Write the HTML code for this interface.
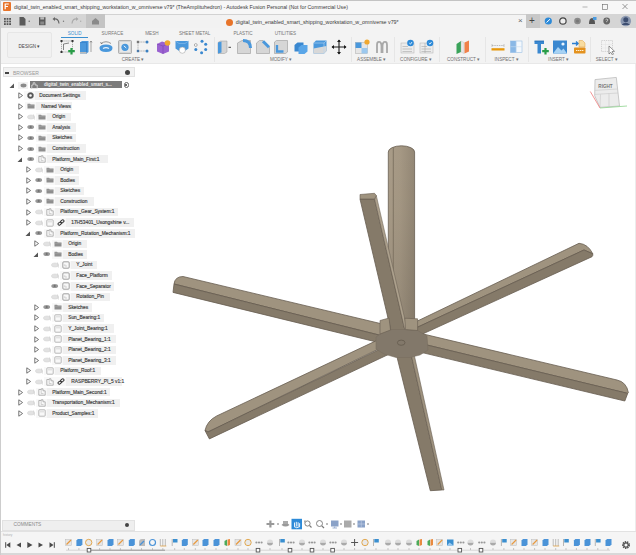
<!DOCTYPE html><html><head><meta charset="utf-8"><style>
*{margin:0;padding:0;box-sizing:border-box}
html,body{width:636px;height:555px;overflow:hidden;background:#fff;font-family:"Liberation Sans",sans-serif;color:#333;position:relative}
.a{position:absolute}
.t{position:absolute;white-space:nowrap;font-size:5px;line-height:6px;color:#444}
.c{position:absolute;white-space:nowrap;font-size:4.6px;line-height:5px;color:#666;transform:translateX(-50%)}
.sep{position:absolute;top:37px;width:1px;height:25px;background:#e6e6e6}
</style></head><body><svg class="a" style="left:0;top:0" width="636" height="555" viewBox="0 0 636 555"><defs><linearGradient id="pg" x1="0" x2="1" y1="0" y2="0"><stop offset="0" stop-color="#a99c88"/><stop offset="0.45" stop-color="#a59884"/><stop offset="1" stop-color="#938775"/></linearGradient></defs><path d="M388.3,152 A13.15,6.2 0 0 1 414.6,152 L414.6,322 L388.3,322 Z" fill="url(#pg)" stroke="#675d50" stroke-width="0.8" stroke-linejoin="round"/><defs><linearGradient id="pv" x1="0" x2="0" y1="0" y2="1"><stop offset="0" stop-color="#000" stop-opacity="0"/><stop offset="0.35" stop-color="#000" stop-opacity="0.02"/><stop offset="1" stop-color="#000" stop-opacity="0.1"/></linearGradient></defs><rect x="388.7" y="150" width="25.5" height="172" fill="url(#pv)"/><line x1="393.3" y1="147.5" x2="393.3" y2="322" stroke="#7a6f60" stroke-width="0.9"/><path d="M579,243.3 Q588,244 592.8,253.8 L584,250 L405,333 L405,327 Z" fill="#9f937f" stroke="#675d50" stroke-width="0.8" stroke-linejoin="round"/><path d="M584,250 L592.8,253.8 Q593,256 592,256.7 L405,342 L405,333 Z" fill="#857a69" stroke="#675d50" stroke-width="0.8" stroke-linejoin="round"/><path d="M174,284 Q175,276.5 183,276.5 L395,327 L395,339 Z" fill="#9f937f" stroke="#675d50" stroke-width="0.8" stroke-linejoin="round"/><path d="M174,284 L395,339 L395,346.5 L173,292.4 Z" fill="#857a69" stroke="#675d50" stroke-width="0.8" stroke-linejoin="round"/><path d="M400,328.5 L617,380 Q626.5,382 628.4,392.7 L627.7,393.4 L400,338.5 Z" fill="#9f937f" stroke="#675d50" stroke-width="0.8" stroke-linejoin="round"/><path d="M400,338.5 L627.7,393.4 L624.8,401 L400,347.3 Z" fill="#857a69" stroke="#675d50" stroke-width="0.8" stroke-linejoin="round"/><path d="M400,329.5 L216.6,416 Q207,421 205,430.5 L208,432 L400,338.5 Z" fill="#9f937f" stroke="#675d50" stroke-width="0.8" stroke-linejoin="round"/><path d="M400,339.5 L208,432 L205,430.5 L209.4,438.9 L400,349 Z" fill="#857a69" stroke="#675d50" stroke-width="0.8" stroke-linejoin="round"/><polygon points="360.0,199.0 374.6,199.0 406.0,335.0 392.0,335.0" fill="#857a69" stroke="#675d50" stroke-width="0.8" stroke-linejoin="round"/><polygon points="374.6,199.0 376.3,195.5 408.5,335.0 406.0,335.0" fill="#ada18d" stroke="#675d50" stroke-width="0.5" stroke-linejoin="round"/><polygon points="360.0,194.5 374.5,193.3 376.3,195.5 374.6,199.0 360.0,199.0" fill="#9f937f" stroke="#675d50" stroke-width="0.6" stroke-linejoin="round"/><polygon points="394.0,345.0 409.0,345.0 441.8,490.0 430.3,490.7" fill="#857a69" stroke="#675d50" stroke-width="0.8" stroke-linejoin="round"/><polygon points="409.0,345.0 412.0,345.0 444.0,490.0 441.8,490.0" fill="#9f937f" stroke="#675d50" stroke-width="0.6" stroke-linejoin="round"/><polygon points="376.0,337.0 384.0,331.5 392.0,329.5 404.0,329.5 417.6,330.5 427.0,336.0 428.0,350.0 420.0,355.0 410.0,357.5 396.0,357.5 384.0,354.0 376.0,349.0" fill="#82786a" stroke="#766c5e" stroke-width="0.5" stroke-linejoin="round"/><polygon points="380.0,320.5 389.0,318.0 390.5,330.0 380.0,334.0" fill="#9f937f" stroke="#675d50" stroke-width="0.6" stroke-linejoin="round"/><polygon points="404.8,318.2 417.6,318.8 417.6,330.5 405.5,329.5" fill="#9f937f" stroke="#675d50" stroke-width="0.6" stroke-linejoin="round"/><ellipse cx="401.2" cy="342.7" rx="3.8" ry="2.6" fill="none" stroke="#675d50" stroke-width="0.9"/></svg><div class="a" style="left:0;top:0;width:636px;height:14.5px;background:#f7f7f7;border-top:0.8px solid #c4c4c4;border-bottom:1px solid #d2d2d2"></div>
<svg class="a" style="left:3px;top:2.2px" width="8" height="9"><rect x="0" y="0" width="8" height="9" rx="1" fill="#e8742a"/><path d="M2.2,7.2 V2 H5.8 M2.2,4.5 H5" stroke="#fff" stroke-width="1.2" fill="none"/></svg>
<div class="t" style="left:14px;top:3.5px;font-size:5.22px;color:#3a3a3a">digital_twin_enabled_smart_shipping_workstation_w_omniverse v79* (TheAmplituhedron) - Autodesk Fusion Personal (Not for Commercial Use)</div>
<svg class="a" style="left:578px;top:0" width="58" height="14"><path d="M4.5,7 H9.5" stroke="#888" stroke-width="0.6"/><rect x="24.3" y="4.3" width="5" height="5" fill="none" stroke="#666" stroke-width="0.6"/><path d="M44.5,4 L49.5,9 M49.5,4 L44.5,9" stroke="#666" stroke-width="0.65"/></svg>
<div class="a" style="left:0;top:14.5px;width:636px;height:13.5px;background:#f2f2f2"></div>
<div class="a" style="left:0;top:14px;width:105px;height:14px;background:#d5d5d5"></div>
<div class="a" style="left:86px;top:14px;width:19px;height:14px;background:#c4c4c4"></div>
<div class="a" style="left:222px;top:14.5px;width:304px;height:13.5px;background:#f3f3f3"></div>
<div class="a" style="left:526px;top:14px;width:14px;height:14px;background:#c8c8c8"></div>
<div class="a" style="left:540px;top:14px;width:96px;height:14px;background:#d5d5d5"></div>
<div class="a" style="left:226px;top:18.7px;width:7px;height:7px;background:#e8742a;border-radius:50%"></div>
<div class="t" style="left:235.8px;top:19px;font-size:5.3px;color:#3a3a3a">digital_twin_enabled_smart_shipping_workstation_w_omniverse v79*</div>
<div class="t" style="left:518px;top:15px;font-size:8px;line-height:11px;color:#666">&#xd7;</div>
<div class="t" style="left:529px;top:14px;font-size:10px;line-height:13px;color:#444">+</div>
<svg class="a" style="left:540px;top:14px" width="96" height="14"><circle cx="8.3" cy="7" r="3.6" fill="#2d8ad8"/><path d="M6.5,8.5 L10,5.2" stroke="#fff" stroke-width="1"/><circle cx="22.9" cy="7" r="3.2" fill="#eee" stroke="#444" stroke-width="1.2"/><circle cx="37.5" cy="7" r="3.3" fill="#8a8a8a"/><circle cx="37.5" cy="7" r="1.5" fill="#777"/><path d="M49,10 Q49,4 52,4 Q55,4 55,10Z" fill="#555"/><rect x="53" y="3" width="3.5" height="3" fill="#4a9be0"/><circle cx="66.7" cy="7" r="3.4" fill="#666"/><path d="M65.5,5.8 Q66.7,4.3 67.9,5.8 Q67.9,6.8 66.7,7.3 V8.2" stroke="#ddd" stroke-width="0.8" fill="none"/><circle cx="85.8" cy="7" r="5.3" fill="#8b98b0"/><circle cx="85.8" cy="5.8" r="2.5" fill="#3d4e70"/><path d="M81.5,11 Q85.8,6.5 90,11Z" fill="#3d4e70"/></svg>
<svg class="a" style="left:0;top:14px" width="105" height="14"><g fill="#555"><rect x="4" y="4" width="1.8" height="1.8"/><rect x="6.6" y="4" width="1.8" height="1.8"/><rect x="9.2" y="4" width="1.8" height="1.8"/><rect x="4" y="6.6" width="1.8" height="1.8"/><rect x="6.6" y="6.6" width="1.8" height="1.8"/><rect x="9.2" y="6.6" width="1.8" height="1.8"/><rect x="4" y="9.2" width="1.8" height="1.8"/><rect x="6.6" y="9.2" width="1.8" height="1.8"/><rect x="9.2" y="9.2" width="1.8" height="1.8"/></g><path d="M19.5,3 H23.5 L25.5,5 V11.5 H19.5Z" fill="#5a5a5a"/><circle cx="29.2" cy="7.3" r="0.7" fill="#666"/><rect x="39" y="3.2" width="6.5" height="8" fill="#5a5a5a"/><rect x="40.3" y="3.2" width="3.8" height="2.3" fill="#bbb"/><rect x="40.3" y="7.5" width="3.8" height="3" fill="#888"/><path d="M54,5 Q58.5,4.2 59,9.5" stroke="#666" stroke-width="1.2" fill="none"/><path d="M52.5,5 L55,3 V7Z" fill="#666"/><circle cx="63.5" cy="7.3" r="0.7" fill="#777"/><path d="M77,5 Q72.5,4.2 72,9.5" stroke="#aaa" stroke-width="1.2" fill="none"/><path d="M78.5,5 L76,3 V7Z" fill="#aaa"/><circle cx="80.7" cy="7.3" r="0.7" fill="#aaa"/><path d="M92,7 L95.5,4 L99,7 V10.5 H92Z" fill="#8a8a8a"/></svg>
<div class="a" style="left:0;top:28px;width:636px;height:36px;background:#f3f3f3;border-bottom:0.6px solid #e8e8e8"></div>
<div class="a" style="left:7px;top:32px;width:45px;height:26px;background:#f1f1f1;border:0.8px solid #e6e6e6;border-radius:2px"></div>
<div class="c" style="left:29.5px;top:44.3px;color:#444">DESIGN &#x25be;</div>
<div class="c" style="left:74.7px;top:30.7px;color:#3a8fd0">SOLID</div>
<div class="c" style="left:112.4px;top:30.7px;color:#777">SURFACE</div>
<div class="c" style="left:151.9px;top:30.7px;color:#777">MESH</div>
<div class="c" style="left:194.7px;top:30.7px;color:#777">SHEET METAL</div>
<div class="c" style="left:243px;top:30.7px;color:#777">PLASTIC</div>
<div class="c" style="left:285.4px;top:30.7px;color:#777">UTILITIES</div>
<div class="a" style="left:61.3px;top:36.5px;width:26.5px;height:1.3px;background:#3a8fd0"></div>
<div class="c" style="left:133px;top:57.2px;color:#707070">CREATE &#x25be;</div>
<div class="c" style="left:281px;top:57.2px;color:#707070">MODIFY &#x25be;</div>
<div class="c" style="left:371.6px;top:57.2px;color:#707070">ASSEMBLE &#x25be;</div>
<div class="c" style="left:416px;top:57.2px;color:#707070">CONFIGURE &#x25be;</div>
<div class="c" style="left:463.5px;top:57.2px;color:#707070">CONSTRUCT &#x25be;</div>
<div class="c" style="left:506.6px;top:57.2px;color:#707070">INSPECT &#x25be;</div>
<div class="c" style="left:558.6px;top:57.2px;color:#707070">INSERT &#x25be;</div>
<div class="c" style="left:606.8px;top:57.2px;color:#707070">SELECT &#x25be;</div>
<div class="sep" style="left:214px"></div>
<div class="sep" style="left:350.6px"></div>
<div class="sep" style="left:394px"></div>
<div class="sep" style="left:439px"></div>
<div class="sep" style="left:484.5px"></div>
<div class="sep" style="left:528.4px"></div>
<div class="sep" style="left:589.8px"></div>
<svg class="a" style="left:60px;top:38.5px" width="16" height="16" viewBox="0 0 16 16"><rect x="1.5" y="2" width="11" height="11" fill="none" stroke="#777" stroke-width="0.6" stroke-dasharray="1.2 0.8"/><g fill="#333"><rect x="0.5" y="1" width="2" height="2"/><rect x="11.5" y="1" width="2" height="2"/><rect x="0.5" y="12" width="2" height="2"/></g><path d="M3.5,11 L3.5,5 L9,4" stroke="#555" stroke-width="0.7" fill="none"/><path d="M11.5,9 V15.5 M8.2,12.2 H14.8" stroke="#2a9d48" stroke-width="2.2"/></svg>
<svg class="a" style="left:78px;top:38.5px" width="16" height="16" viewBox="0 0 16 16"><path d="M2,3.5 L4,2 L10.5,2 L10.5,13 L8.5,14.5 L2,14.5Z" fill="#4a98dc"/><path d="M2,3.5 H8.5 V14.5" stroke="#2f7bc4" stroke-width="0.6" fill="none"/><path d="M2,13 H8.5 L8.5,14.5 L2,14.5Z" fill="#bbb"/><path d="M13,2 V13" stroke="#555" stroke-width="0.5"/><path d="M12,3.5 L13,2 L14,3.5" stroke="#555" stroke-width="0.5" fill="none"/></svg>
<svg class="a" style="left:98px;top:38.5px" width="16" height="16" viewBox="0 0 16 16"><path d="M1.5,9 Q1.5,5.5 8,5.5 Q14.5,5.5 14.5,9 Q14.5,13 8,13 Q1.5,13 1.5,9Z" fill="#4a98dc"/><path d="M5,9.5 Q8,7.8 11,9.5" stroke="#e8f2fb" stroke-width="1.2" fill="none"/><path d="M3,4.5 Q8,1 13,4.5" stroke="#555" stroke-width="0.6" fill="none"/><path d="M3,4.5 L2.5,3 M3,4.5 L4.5,4.3" stroke="#555" stroke-width="0.5"/></svg>
<svg class="a" style="left:116.8px;top:38.5px" width="16" height="16" viewBox="0 0 16 16"><rect x="1.5" y="1.5" width="13" height="13" rx="1" fill="#d6d6d6" stroke="#999" stroke-width="0.7"/><rect x="3" y="3" width="10" height="10" fill="#e8e8e8"/><circle cx="8" cy="8.3" r="3.6" fill="#4a98dc"/><path d="M6.8,6.8 L9.3,9" stroke="#fff" stroke-width="0.9"/></svg>
<svg class="a" style="left:134.7px;top:38.5px" width="16" height="16" viewBox="0 0 16 16"><path d="M3,3 H12 M3,3 V12 M3,12 H12" stroke="#666" stroke-width="0.5" stroke-dasharray="1 0.6"/><rect x="1.8" y="1.8" width="2.4" height="2.4" fill="#777"/><rect x="1.8" y="10.8" width="2.4" height="2.4" fill="#4a78a8"/><circle cx="12" cy="3" r="1.5" fill="#3a7fc0"/><circle cx="12" cy="12" r="1.5" fill="#3a7fc0"/></svg>
<svg class="a" style="left:154.5px;top:38.5px" width="16" height="16" viewBox="0 0 16 16"><path d="M2,5 L7,2.5 L14,4.5 L14,12.5 L8,15 L2,12.5Z" fill="#9a62d0"/><path d="M2,5 L8,7 L14,4.5 M8,7 V15" stroke="#7a44b4" stroke-width="0.6" fill="none"/><circle cx="12.5" cy="4" r="2.8" fill="#f0a830"/></svg>
<svg class="a" style="left:174px;top:38.5px" width="16" height="16" viewBox="0 0 16 16"><path d="M1.5,2 H14.5 V9.5 Q8,15.5 1.5,9.5Z" fill="#4a98dc"/><path d="M1.5,2 L5,4.5 H11 L14.5,2" stroke="#8cc0ec" stroke-width="0.6" fill="none"/><circle cx="8.3" cy="11.2" r="3.1" fill="#fff" stroke="#999" stroke-width="0.5"/></svg>
<svg class="a" style="left:192.3px;top:38.5px" width="16" height="16" viewBox="0 0 16 16"><g fill="#3a88d0"><circle cx="10" cy="2.2" r="1.5"/><circle cx="13.7" cy="5.3" r="1.5"/><circle cx="13.7" cy="10.5" r="1.5"/><circle cx="9.6" cy="13.8" r="1.5"/><circle cx="3.8" cy="10.5" r="1.5"/></g><circle cx="3.8" cy="6" r="1.4" fill="#fff" stroke="#666" stroke-width="0.5"/></svg>
<svg class="a" style="left:216.2px;top:38.5px" width="16" height="16" viewBox="0 0 16 16"><path d="M2,3.5 L4.5,2 L11,2 L11,13 L8.5,14.5 L2,14.5Z" fill="#d4d4d4" stroke="#999" stroke-width="0.5"/><path d="M2,3.5 L5.5,2.5 L5.5,13.5 L2,14.5Z" fill="#4a98dc"/><path d="M12.5,8.3 H15" stroke="#333" stroke-width="0.9"/></svg>
<svg class="a" style="left:235.6px;top:38.5px" width="16" height="16" viewBox="0 0 16 16"><path d="M1.5,14.5 V4 L6,1.5 H14.5 V14.5Z" fill="#d6d6d6" stroke="#9a9a9a" stroke-width="0.6"/><path d="M7,1.5 Q14.5,1.5 14.5,9" stroke="#4a98dc" stroke-width="3" fill="none"/></svg>
<svg class="a" style="left:255px;top:38.5px" width="16" height="16" viewBox="0 0 16 16"><path d="M1.5,14.5 V4 L4.5,1.5 H8 L14.5,8 V14.5Z" fill="#d6d6d6" stroke="#9a9a9a" stroke-width="0.6"/><path d="M8,2.2 L14,8.2" stroke="#4a98dc" stroke-width="3"/></svg>
<svg class="a" style="left:273.4px;top:38.5px" width="16" height="16" viewBox="0 0 16 16"><path d="M1.5,3 L3.5,1.5 H14.5 V13 L12.5,14.5 H1.5Z" fill="#d6d6d6" stroke="#9a9a9a" stroke-width="0.6"/><path d="M4,6 V12.5 H10.5" stroke="#4a98dc" stroke-width="2.3" fill="none"/></svg>
<svg class="a" style="left:292.8px;top:38.5px" width="16" height="16" viewBox="0 0 16 16"><path d="M1.5,6 L4.5,3.5 H10.5 V10 L7.5,12.5 H1.5Z" fill="#3a88d0"/><path d="M5.5,8.5 L8.5,6 H14.5 V12.5 L11.5,15 H5.5Z" fill="#5aa6e8"/></svg>
<svg class="a" style="left:311.7px;top:38.5px" width="16" height="16" viewBox="0 0 16 16"><path d="M1.5,4 L4,1.5 H14.5 V12 L12,14.5 H1.5Z" fill="#4a98dc"/><path d="M1.5,9.5 L14.5,7 V12 L12,14.5 H1.5Z" fill="#d8d8d8"/><path d="M1.5,4 H12 L14.5,1.5 M12,4 V14.5" stroke="#b8d8f4" stroke-width="0.6" fill="none"/></svg>
<svg class="a" style="left:330.5px;top:38.5px" width="16" height="16" viewBox="0 0 16 16"><path d="M8,1 V15 M1,8 H15" stroke="#1a1a1a" stroke-width="1.1"/><path d="M8,0.5 L6,3 H10Z M8,15.5 L6,13 H10Z M0.5,8 L3,6 V10Z M15.5,8 L13,6 V10Z" fill="#1a1a1a"/></svg>
<svg class="a" style="left:353.7px;top:38.5px" width="16" height="16" viewBox="0 0 16 16"><rect x="1.5" y="3.5" width="12" height="11" fill="#e6e6e6" stroke="#aaa" stroke-width="0.5"/><rect x="1.5" y="3.5" width="6" height="5.5" fill="#4a98dc"/><rect x="7.5" y="9" width="6" height="5.5" fill="#9cc8ee"/><circle cx="13" cy="3" r="2.6" fill="#f0a830"/></svg>
<svg class="a" style="left:373.7px;top:38.5px" width="16" height="16" viewBox="0 0 16 16"><path d="M3,14 V6 Q3,2 6,3 Q7.5,4 7.5,7 V14 M8.5,14 V7 Q8.5,4 10,3 Q13,2 13,6 V14" stroke="#a8a8a8" stroke-width="1.8" fill="none"/></svg>
<svg class="a" style="left:399.8px;top:38.5px" width="16" height="16" viewBox="0 0 16 16"><rect x="1" y="4" width="13" height="10" fill="#ececec" stroke="#b0b0b0" stroke-width="0.5"/><path d="M2.5,7.5 H8 M2.5,10 H12 M2.5,12.5 H12" stroke="#aaa" stroke-width="0.6"/><circle cx="10.5" cy="4" r="3.3" fill="#2d8ad8"/><path d="M9.3,4 L10.5,5.2 L12,3" stroke="#fff" stroke-width="0.8" fill="none"/></svg>
<svg class="a" style="left:418.5px;top:38.5px" width="16" height="16" viewBox="0 0 16 16"><rect x="1" y="4" width="13" height="10" fill="#ececec" stroke="#b0b0b0" stroke-width="0.5"/><path d="M2.5,7.5 H8 M2.5,10 H12 M2.5,12.5 H12 M6,4 V14" stroke="#aaa" stroke-width="0.6"/><circle cx="11" cy="4" r="3.3" fill="#2d8ad8"/><path d="M9.8,4 L11,5.2 L12.5,3" stroke="#fff" stroke-width="0.8" fill="none"/></svg>
<svg class="a" style="left:454.8px;top:38.5px" width="16" height="16" viewBox="0 0 16 16"><path d="M1.5,5 L6,2 V13 L1.5,15Z" fill="#3aa35a"/><path d="M6,2 L9,3.5 V14.5 L6,13Z" fill="#e8e8e8" stroke="#bbb" stroke-width="0.4"/><path d="M9.5,3.5 L14,1.5 V12.5 L9.5,14.5Z" fill="#f0824a"/></svg>
<svg class="a" style="left:489.6px;top:38.5px" width="16" height="16" viewBox="0 0 16 16"><path d="M2,6.5 H14" stroke="#999" stroke-width="0.6" stroke-dasharray="1.5 0.8"/><path d="M2,5 V8 M14,5 V8" stroke="#999" stroke-width="0.5"/><rect x="1.5" y="9.2" width="13" height="2.3" fill="#e8980a"/></svg>
<svg class="a" style="left:509.1px;top:38.5px" width="16" height="16" viewBox="0 0 16 16"><rect x="1.5" y="2" width="11.5" height="11.5" fill="#f4f8fc" stroke="#9cc0e4" stroke-width="0.6"/><rect x="1.5" y="2" width="5.7" height="11.5" fill="#8ab8e6"/><path d="M7.2,2 V13.5 M1.5,7.7 H13" stroke="#c8dcf0" stroke-width="0.6"/></svg>
<svg class="a" style="left:532.5px;top:38.5px" width="16" height="16" viewBox="0 0 16 16"><path d="M1.5,2 H11 V5 H8 V14.5 H4.5 V5 H1.5Z" fill="#3a88d0"/><path d="M1.5,2 H11" stroke="#2068b0" stroke-width="0.8"/><path d="M12.5,9 V15.5 M9.2,12.2 H15.8" stroke="#2a9d48" stroke-width="2.2"/></svg>
<svg class="a" style="left:552px;top:38.5px" width="16" height="16" viewBox="0 0 16 16"><rect x="1" y="1.5" width="14" height="13" fill="#3a88d0"/><path d="M1,14.5 L6,8 L9.5,11.5 L11.5,9.5 L15,14.5Z" fill="#a6d2f4"/><circle cx="11" cy="5" r="1.6" fill="#e8f4ff"/></svg>
<svg class="a" style="left:570.6px;top:38.5px" width="16" height="16" viewBox="0 0 16 16"><path d="M1,4.5 H7 M5,2.5 L7.2,4.5 L5,6.5" stroke="#2d7fd0" stroke-width="1.3" fill="none"/><path d="M8,1.5 L11.5,1.5 L14,4 L14,8 L8,8Z" fill="#f8dca0" stroke="#e0a040" stroke-width="0.5"/><rect x="3" y="8.5" width="11.5" height="6" rx="0.8" fill="#e4921e"/><path d="M5,11.5 H13" stroke="#fff2d8" stroke-width="1.2" stroke-dasharray="1.3 0.6"/></svg>
<svg class="a" style="left:599.5px;top:38.5px" width="16" height="16" viewBox="0 0 16 16"><rect x="1.5" y="1.5" width="11" height="11" fill="none" stroke="#bbb" stroke-width="0.6" stroke-dasharray="1.3 0.9"/><path d="M5.5,1.5 V12.5 M9,1.5 V12.5 M1.5,5.5 H12.5 M1.5,9 H12.5" stroke="#ddd" stroke-width="0.4"/><path d="M9,7 V15 L10.8,13.3 L12.3,15.8 L13.5,15.1 L12,12.6 L14.5,12.3Z" fill="#fff" stroke="#555" stroke-width="0.6"/></svg>
<div class="a" style="left:635px;top:64px;width:1px;height:491px;background:#ececec"></div>
<div class="a" style="left:2.5px;top:67.3px;width:132px;height:10.2px;background:#f2f2f2;border:0.8px solid #e2e2e2"></div>
<div class="a" style="left:5px;top:72px;width:4px;height:1.5px;background:#444"></div>
<div class="t" style="left:13px;top:70px;font-size:5px;color:#999">BROWSER</div>
<div class="a" style="left:125px;top:70px;width:5px;height:5px;border-radius:50%;background:#444"></div>
<svg class="a" style="left:9.2px;top:82.5px" width="6" height="6"><path d="M5,0.5 L5,5 L0.5,5Z" fill="#555"/></svg>
<svg class="a" style="left:18.7px;top:82.0px" width="8" height="6"><ellipse cx="3.7" cy="3" rx="3.4" ry="2.1" fill="#999"/><circle cx="3.7" cy="3" r="1.1" fill="#707070"/></svg>
<svg class="a" style="left:30.200000000000003px;top:81.0px" width="8" height="8"><path d="M0.8,1.5 H3.2 V0.8 H5 V2.8 H7.2 V7.2 H0.8Z" fill="none" stroke="#9a9a9a" stroke-width="0.7"/><path d="M3.2,1.5 V5.5 H5.5" stroke="#aaa" stroke-width="0.5" fill="none"/></svg>
<div class="a" style="left:18.2px;top:81.5px;width:10px;height:7.5px;background:#f2f2f2"></div>
<svg class="a" style="left:19.7px;top:82.5px" width="7" height="5"><ellipse cx="3.5" cy="2.5" rx="3" ry="1.9" fill="#8a8a8a"/></svg>
<div class="a" style="left:29.5px;top:81.3px;width:92.3px;height:7px;background:#7b7b7b"></div>
<svg class="a" style="left:30.5px;top:81.5px" width="7" height="7"><path d="M2.2,0.8 V3 L0.8,3 V6.5 H6.2 V3 H4 V0.8Z" fill="none" stroke="#eee" stroke-width="0.7"/></svg>
<div class="t" style="left:44px;top:82.2px;color:#f0f0f0;font-weight:bold;font-size:4.5px">digital_twin_enabled_smart_s...</div>
<div class="a" style="left:123.5px;top:82.2px;width:5.8px;height:5.8px;border-radius:50%;border:0.7px solid #666"></div>
<div class="a" style="left:125.4px;top:84.1px;width:2px;height:2px;border-radius:50%;background:#333"></div>
<svg class="a" style="left:17.7px;top:92.09px" width="6" height="7"><path d="M0.8,0.8 L4.6,3.5 L0.8,6.2Z" fill="none" stroke="#666" stroke-width="0.9"/></svg>
<div class="a" style="left:24.2px;top:91.39px;width:11.0px;height:8.5px;background:#f8f8f8"></div>
<div class="a" style="left:35.2px;top:91.39px;width:50.7px;height:8.5px;background:#f0f0f0"></div>
<svg class="a" style="left:26.7px;top:92.09px" width="7" height="7"><circle cx="3.5" cy="3.5" r="2.2" fill="none" stroke="#555" stroke-width="1.7"/><circle cx="3.5" cy="3.5" r="3.1" fill="none" stroke="#777" stroke-width="0.9" stroke-dasharray="1 0.9"/></svg>
<div class="t" style="left:39.2px;top:92.99000000000001px;font-size:4.85px;color:#3c3c3c;-webkit-text-stroke:0.15px #3c3c3c">Document Settings</div>
<svg class="a" style="left:17.7px;top:102.68px" width="6" height="7"><path d="M0.8,0.8 L4.6,3.5 L0.8,6.2Z" fill="none" stroke="#666" stroke-width="0.9"/></svg>
<div class="a" style="left:25.2px;top:101.98px;width:11.0px;height:8.5px;background:#f8f8f8"></div>
<div class="a" style="left:36.2px;top:101.98px;width:36.0px;height:8.5px;background:#f0f0f0"></div>
<svg class="a" style="left:27.2px;top:103.18px" width="8" height="6"><path d="M0.5,0.8 H3 L3.8,1.6 H7.5 V5.5 H0.5Z" fill="#8e8e8e"/><path d="M0.5,2.2 H7.5" stroke="#b0b0b0" stroke-width="0.5"/></svg>
<div class="t" style="left:41.2px;top:103.58000000000001px;font-size:4.85px;color:#3c3c3c;-webkit-text-stroke:0.15px #3c3c3c">Named Views</div>
<svg class="a" style="left:17.7px;top:113.27px" width="6" height="7"><path d="M0.8,0.8 L4.6,3.5 L0.8,6.2Z" fill="none" stroke="#666" stroke-width="0.9"/></svg>
<svg class="a" style="left:26.7px;top:113.77px" width="9" height="6"><ellipse cx="4" cy="3" rx="3.6" ry="2.1" fill="#e2e2e2" stroke="#d2d2d2" stroke-width="0.5"/><path d="M6.5,0.5 L7.5,5.5" stroke="#cfcfcf" stroke-width="0.7"/></svg>
<div class="a" style="left:36.2px;top:112.57px;width:11.0px;height:8.5px;background:#f8f8f8"></div>
<div class="a" style="left:47.2px;top:112.57px;width:23.7px;height:8.5px;background:#f0f0f0"></div>
<svg class="a" style="left:38.2px;top:113.77px" width="8" height="6"><path d="M0.5,0.8 H3 L3.8,1.6 H7.5 V5.5 H0.5Z" fill="#8e8e8e"/><path d="M0.5,2.2 H7.5" stroke="#b0b0b0" stroke-width="0.5"/></svg>
<div class="t" style="left:52.2px;top:114.17px;font-size:4.85px;color:#3c3c3c;-webkit-text-stroke:0.15px #3c3c3c">Origin</div>
<svg class="a" style="left:17.7px;top:123.86px" width="6" height="7"><path d="M0.8,0.8 L4.6,3.5 L0.8,6.2Z" fill="none" stroke="#666" stroke-width="0.9"/></svg>
<svg class="a" style="left:26.7px;top:124.36px" width="8" height="6"><ellipse cx="3.7" cy="3" rx="3.4" ry="2.1" fill="#999"/><circle cx="3.7" cy="3" r="1.1" fill="#707070"/></svg>
<div class="a" style="left:36.2px;top:123.16px;width:11.0px;height:8.5px;background:#f8f8f8"></div>
<div class="a" style="left:47.2px;top:123.16px;width:28.6px;height:8.5px;background:#f0f0f0"></div>
<svg class="a" style="left:38.2px;top:124.36px" width="8" height="6"><path d="M0.5,0.8 H3 L3.8,1.6 H7.5 V5.5 H0.5Z" fill="#8e8e8e"/><path d="M0.5,2.2 H7.5" stroke="#b0b0b0" stroke-width="0.5"/></svg>
<div class="t" style="left:52.2px;top:124.76px;font-size:4.85px;color:#3c3c3c;-webkit-text-stroke:0.15px #3c3c3c">Analysis</div>
<svg class="a" style="left:17.7px;top:134.45px" width="6" height="7"><path d="M0.8,0.8 L4.6,3.5 L0.8,6.2Z" fill="none" stroke="#666" stroke-width="0.9"/></svg>
<svg class="a" style="left:26.7px;top:134.95px" width="8" height="6"><ellipse cx="3.7" cy="3" rx="3.4" ry="2.1" fill="#999"/><circle cx="3.7" cy="3" r="1.1" fill="#707070"/></svg>
<div class="a" style="left:36.2px;top:133.75px;width:11.0px;height:8.5px;background:#f8f8f8"></div>
<div class="a" style="left:47.2px;top:133.75px;width:28.6px;height:8.5px;background:#f0f0f0"></div>
<svg class="a" style="left:38.2px;top:134.95px" width="8" height="6"><path d="M0.5,0.8 H3 L3.8,1.6 H7.5 V5.5 H0.5Z" fill="#8e8e8e"/><path d="M0.5,2.2 H7.5" stroke="#b0b0b0" stroke-width="0.5"/></svg>
<div class="t" style="left:52.2px;top:135.35px;font-size:4.85px;color:#3c3c3c;-webkit-text-stroke:0.15px #3c3c3c">Sketches</div>
<svg class="a" style="left:17.7px;top:145.04px" width="6" height="7"><path d="M0.8,0.8 L4.6,3.5 L0.8,6.2Z" fill="none" stroke="#666" stroke-width="0.9"/></svg>
<svg class="a" style="left:26.7px;top:145.54px" width="8" height="6"><ellipse cx="3.7" cy="3" rx="3.4" ry="2.1" fill="#999"/><circle cx="3.7" cy="3" r="1.1" fill="#707070"/></svg>
<div class="a" style="left:36.2px;top:144.34px;width:11.0px;height:8.5px;background:#f8f8f8"></div>
<div class="a" style="left:47.2px;top:144.34px;width:38.4px;height:8.5px;background:#f0f0f0"></div>
<svg class="a" style="left:38.2px;top:145.54px" width="8" height="6"><path d="M0.5,0.8 H3 L3.8,1.6 H7.5 V5.5 H0.5Z" fill="#8e8e8e"/><path d="M0.5,2.2 H7.5" stroke="#b0b0b0" stroke-width="0.5"/></svg>
<div class="t" style="left:52.2px;top:145.94px;font-size:4.85px;color:#3c3c3c;-webkit-text-stroke:0.15px #3c3c3c">Construction</div>
<svg class="a" style="left:17.2px;top:156.63px" width="6" height="6"><path d="M5,0.5 L5,5 L0.5,5Z" fill="#555"/></svg>
<svg class="a" style="left:26.7px;top:156.13px" width="8" height="6"><ellipse cx="3.7" cy="3" rx="3.4" ry="2.1" fill="#999"/><circle cx="3.7" cy="3" r="1.1" fill="#707070"/></svg>
<div class="a" style="left:36.2px;top:154.93px;width:11.0px;height:8.5px;background:#f8f8f8"></div>
<div class="a" style="left:47.2px;top:154.93px;width:60.5px;height:8.5px;background:#f0f0f0"></div>
<svg class="a" style="left:38.2px;top:155.13px" width="8" height="8"><path d="M0.8,1.5 H3.2 V0.8 H5 V2.8 H7.2 V7.2 H0.8Z" fill="none" stroke="#9a9a9a" stroke-width="0.7"/><path d="M3.2,1.5 V5.5 H5.5" stroke="#aaa" stroke-width="0.5" fill="none"/></svg>
<div class="t" style="left:52.2px;top:156.53px;font-size:4.85px;color:#3c3c3c;-webkit-text-stroke:0.15px #3c3c3c">Platform_Main_First:1</div>
<svg class="a" style="left:25.7px;top:166.22px" width="6" height="7"><path d="M0.8,0.8 L4.6,3.5 L0.8,6.2Z" fill="none" stroke="#666" stroke-width="0.9"/></svg>
<svg class="a" style="left:34.7px;top:166.72px" width="9" height="6"><ellipse cx="4" cy="3" rx="3.6" ry="2.1" fill="#e2e2e2" stroke="#d2d2d2" stroke-width="0.5"/><path d="M6.5,0.5 L7.5,5.5" stroke="#cfcfcf" stroke-width="0.7"/></svg>
<div class="a" style="left:44.2px;top:165.52px;width:11.0px;height:8.5px;background:#f8f8f8"></div>
<div class="a" style="left:55.2px;top:165.52px;width:23.7px;height:8.5px;background:#f0f0f0"></div>
<svg class="a" style="left:46.2px;top:166.72px" width="8" height="6"><path d="M0.5,0.8 H3 L3.8,1.6 H7.5 V5.5 H0.5Z" fill="#8e8e8e"/><path d="M0.5,2.2 H7.5" stroke="#b0b0b0" stroke-width="0.5"/></svg>
<div class="t" style="left:60.2px;top:167.12px;font-size:4.85px;color:#3c3c3c;-webkit-text-stroke:0.15px #3c3c3c">Origin</div>
<svg class="a" style="left:25.7px;top:176.81px" width="6" height="7"><path d="M0.8,0.8 L4.6,3.5 L0.8,6.2Z" fill="none" stroke="#666" stroke-width="0.9"/></svg>
<svg class="a" style="left:34.7px;top:177.31px" width="8" height="6"><ellipse cx="3.7" cy="3" rx="3.4" ry="2.1" fill="#999"/><circle cx="3.7" cy="3" r="1.1" fill="#707070"/></svg>
<div class="a" style="left:44.2px;top:176.11px;width:11.0px;height:8.5px;background:#f8f8f8"></div>
<div class="a" style="left:55.2px;top:176.11px;width:23.7px;height:8.5px;background:#f0f0f0"></div>
<svg class="a" style="left:46.2px;top:177.31px" width="8" height="6"><path d="M0.5,0.8 H3 L3.8,1.6 H7.5 V5.5 H0.5Z" fill="#8e8e8e"/><path d="M0.5,2.2 H7.5" stroke="#b0b0b0" stroke-width="0.5"/></svg>
<div class="t" style="left:60.2px;top:177.71px;font-size:4.85px;color:#3c3c3c;-webkit-text-stroke:0.15px #3c3c3c">Bodies</div>
<svg class="a" style="left:25.7px;top:187.4px" width="6" height="7"><path d="M0.8,0.8 L4.6,3.5 L0.8,6.2Z" fill="none" stroke="#666" stroke-width="0.9"/></svg>
<svg class="a" style="left:34.7px;top:187.9px" width="8" height="6"><ellipse cx="3.7" cy="3" rx="3.4" ry="2.1" fill="#999"/><circle cx="3.7" cy="3" r="1.1" fill="#707070"/></svg>
<div class="a" style="left:44.2px;top:186.70000000000002px;width:11.0px;height:8.5px;background:#f8f8f8"></div>
<div class="a" style="left:55.2px;top:186.70000000000002px;width:28.6px;height:8.5px;background:#f0f0f0"></div>
<svg class="a" style="left:46.2px;top:187.9px" width="8" height="6"><path d="M0.5,0.8 H3 L3.8,1.6 H7.5 V5.5 H0.5Z" fill="#8e8e8e"/><path d="M0.5,2.2 H7.5" stroke="#b0b0b0" stroke-width="0.5"/></svg>
<div class="t" style="left:60.2px;top:188.3px;font-size:4.85px;color:#3c3c3c;-webkit-text-stroke:0.15px #3c3c3c">Sketches</div>
<svg class="a" style="left:25.7px;top:197.99px" width="6" height="7"><path d="M0.8,0.8 L4.6,3.5 L0.8,6.2Z" fill="none" stroke="#666" stroke-width="0.9"/></svg>
<svg class="a" style="left:34.7px;top:198.49px" width="8" height="6"><ellipse cx="3.7" cy="3" rx="3.4" ry="2.1" fill="#999"/><circle cx="3.7" cy="3" r="1.1" fill="#707070"/></svg>
<div class="a" style="left:44.2px;top:197.29000000000002px;width:11.0px;height:8.5px;background:#f8f8f8"></div>
<div class="a" style="left:55.2px;top:197.29000000000002px;width:38.4px;height:8.5px;background:#f0f0f0"></div>
<svg class="a" style="left:46.2px;top:198.49px" width="8" height="6"><path d="M0.5,0.8 H3 L3.8,1.6 H7.5 V5.5 H0.5Z" fill="#8e8e8e"/><path d="M0.5,2.2 H7.5" stroke="#b0b0b0" stroke-width="0.5"/></svg>
<div class="t" style="left:60.2px;top:198.89000000000001px;font-size:4.85px;color:#3c3c3c;-webkit-text-stroke:0.15px #3c3c3c">Construction</div>
<svg class="a" style="left:25.7px;top:208.57999999999998px" width="6" height="7"><path d="M0.8,0.8 L4.6,3.5 L0.8,6.2Z" fill="none" stroke="#666" stroke-width="0.9"/></svg>
<svg class="a" style="left:34.7px;top:209.07999999999998px" width="9" height="6"><ellipse cx="4" cy="3" rx="3.6" ry="2.1" fill="#e2e2e2" stroke="#d2d2d2" stroke-width="0.5"/><path d="M6.5,0.5 L7.5,5.5" stroke="#cfcfcf" stroke-width="0.7"/></svg>
<div class="a" style="left:44.2px;top:207.88px;width:11.0px;height:8.5px;background:#f8f8f8"></div>
<div class="a" style="left:55.2px;top:207.88px;width:62.9px;height:8.5px;background:#f0f0f0"></div>
<svg class="a" style="left:46.2px;top:208.07999999999998px" width="8" height="8"><path d="M0.8,1.5 H3.2 V0.8 H5 V2.8 H7.2 V7.2 H0.8Z" fill="none" stroke="#9a9a9a" stroke-width="0.7"/><path d="M3.2,1.5 V5.5 H5.5" stroke="#aaa" stroke-width="0.5" fill="none"/></svg>
<div class="t" style="left:60.2px;top:209.48px;font-size:4.85px;color:#3c3c3c;-webkit-text-stroke:0.15px #3c3c3c">Platform_Gear_System:1</div>
<svg class="a" style="left:25.7px;top:219.17px" width="6" height="7"><path d="M0.8,0.8 L4.6,3.5 L0.8,6.2Z" fill="none" stroke="#666" stroke-width="0.9"/></svg>
<svg class="a" style="left:34.7px;top:219.67px" width="9" height="6"><ellipse cx="4" cy="3" rx="3.6" ry="2.1" fill="#e2e2e2" stroke="#d2d2d2" stroke-width="0.5"/><path d="M6.5,0.5 L7.5,5.5" stroke="#cfcfcf" stroke-width="0.7"/></svg>
<div class="a" style="left:44.2px;top:218.47px;width:22.0px;height:8.5px;background:#f8f8f8"></div>
<div class="a" style="left:66.2px;top:218.47px;width:67.8px;height:8.5px;background:#f0f0f0"></div>
<svg class="a" style="left:46.2px;top:218.67px" width="8" height="8"><rect x="0.8" y="0.8" width="6.4" height="6.4" rx="0.8" fill="none" stroke="#a0a0a0" stroke-width="0.7"/><path d="M2,2.8 H6" stroke="#bbb" stroke-width="0.5"/></svg>
<svg class="a" style="left:57.2px;top:219.17px" width="8" height="7"><g fill="none" stroke="#333" stroke-width="1"><rect x="0.9" y="3.4" width="3.6" height="2.4" rx="1.2" transform="rotate(-40 2.7 4.6)"/><rect x="3.5" y="1.2" width="3.6" height="2.4" rx="1.2" transform="rotate(-40 5.3 2.4)"/></g></svg>
<div class="t" style="left:71.2px;top:220.07px;font-size:4.85px;color:#3c3c3c;-webkit-text-stroke:0.15px #3c3c3c">17H53401_Usongshine v...</div>
<svg class="a" style="left:25.2px;top:230.76px" width="6" height="6"><path d="M5,0.5 L5,5 L0.5,5Z" fill="#555"/></svg>
<svg class="a" style="left:34.7px;top:230.26px" width="8" height="6"><ellipse cx="3.7" cy="3" rx="3.4" ry="2.1" fill="#999"/><circle cx="3.7" cy="3" r="1.1" fill="#707070"/></svg>
<div class="a" style="left:44.2px;top:229.06px;width:11.0px;height:8.5px;background:#f8f8f8"></div>
<div class="a" style="left:55.2px;top:229.06px;width:80.1px;height:8.5px;background:#f0f0f0"></div>
<svg class="a" style="left:46.2px;top:229.26px" width="8" height="8"><path d="M0.8,1.5 H3.2 V0.8 H5 V2.8 H7.2 V7.2 H0.8Z" fill="none" stroke="#9a9a9a" stroke-width="0.7"/><path d="M3.2,1.5 V5.5 H5.5" stroke="#aaa" stroke-width="0.5" fill="none"/></svg>
<div class="t" style="left:60.2px;top:230.66px;font-size:4.85px;color:#3c3c3c;-webkit-text-stroke:0.15px #3c3c3c">Platform_Rotation_Mechanism:1</div>
<svg class="a" style="left:33.7px;top:240.35px" width="6" height="7"><path d="M0.8,0.8 L4.6,3.5 L0.8,6.2Z" fill="none" stroke="#666" stroke-width="0.9"/></svg>
<svg class="a" style="left:42.7px;top:240.85px" width="9" height="6"><ellipse cx="4" cy="3" rx="3.6" ry="2.1" fill="#e2e2e2" stroke="#d2d2d2" stroke-width="0.5"/><path d="M6.5,0.5 L7.5,5.5" stroke="#cfcfcf" stroke-width="0.7"/></svg>
<div class="a" style="left:52.2px;top:239.65px;width:11.0px;height:8.5px;background:#f8f8f8"></div>
<div class="a" style="left:63.2px;top:239.65px;width:23.7px;height:8.5px;background:#f0f0f0"></div>
<svg class="a" style="left:54.2px;top:240.85px" width="8" height="6"><path d="M0.5,0.8 H3 L3.8,1.6 H7.5 V5.5 H0.5Z" fill="#8e8e8e"/><path d="M0.5,2.2 H7.5" stroke="#b0b0b0" stroke-width="0.5"/></svg>
<div class="t" style="left:68.2px;top:241.25px;font-size:4.85px;color:#3c3c3c;-webkit-text-stroke:0.15px #3c3c3c">Origin</div>
<svg class="a" style="left:33.2px;top:251.94px" width="6" height="6"><path d="M5,0.5 L5,5 L0.5,5Z" fill="#555"/></svg>
<svg class="a" style="left:42.7px;top:251.44px" width="8" height="6"><ellipse cx="3.7" cy="3" rx="3.4" ry="2.1" fill="#999"/><circle cx="3.7" cy="3" r="1.1" fill="#707070"/></svg>
<div class="a" style="left:52.2px;top:250.24px;width:11.0px;height:8.5px;background:#f8f8f8"></div>
<div class="a" style="left:63.2px;top:250.24px;width:23.7px;height:8.5px;background:#f0f0f0"></div>
<svg class="a" style="left:54.2px;top:251.44px" width="8" height="6"><path d="M0.5,0.8 H3 L3.8,1.6 H7.5 V5.5 H0.5Z" fill="#8e8e8e"/><path d="M0.5,2.2 H7.5" stroke="#b0b0b0" stroke-width="0.5"/></svg>
<div class="t" style="left:68.2px;top:251.84px;font-size:4.85px;color:#3c3c3c;-webkit-text-stroke:0.15px #3c3c3c">Bodies</div>
<svg class="a" style="left:50.7px;top:262.03px" width="9" height="6"><ellipse cx="4" cy="3" rx="3.6" ry="2.1" fill="#e2e2e2" stroke="#d2d2d2" stroke-width="0.5"/><path d="M6.5,0.5 L7.5,5.5" stroke="#cfcfcf" stroke-width="0.7"/></svg>
<div class="a" style="left:60.2px;top:260.83px;width:11.0px;height:8.5px;background:#f8f8f8"></div>
<div class="a" style="left:71.2px;top:260.83px;width:26.2px;height:8.5px;background:#f0f0f0"></div>
<svg class="a" style="left:62.2px;top:261.03px" width="8" height="8"><rect x="0.8" y="0.8" width="6.4" height="6.4" rx="1" fill="none" stroke="#8c8c8c" stroke-width="0.8"/><path d="M2.8,3.2 V5 H5" stroke="#aaa" stroke-width="0.5" fill="none"/></svg>
<div class="t" style="left:76.2px;top:262.42999999999995px;font-size:4.85px;color:#3c3c3c;-webkit-text-stroke:0.15px #3c3c3c">Y_Joint</div>
<svg class="a" style="left:50.7px;top:272.62px" width="9" height="6"><ellipse cx="4" cy="3" rx="3.6" ry="2.1" fill="#e2e2e2" stroke="#d2d2d2" stroke-width="0.5"/><path d="M6.5,0.5 L7.5,5.5" stroke="#cfcfcf" stroke-width="0.7"/></svg>
<div class="a" style="left:60.2px;top:271.42px;width:11.0px;height:8.5px;background:#f8f8f8"></div>
<div class="a" style="left:71.2px;top:271.42px;width:40.9px;height:8.5px;background:#f0f0f0"></div>
<svg class="a" style="left:62.2px;top:271.62px" width="8" height="8"><rect x="0.8" y="0.8" width="6.4" height="6.4" rx="1" fill="none" stroke="#8c8c8c" stroke-width="0.8"/><path d="M2.8,3.2 V5 H5" stroke="#aaa" stroke-width="0.5" fill="none"/></svg>
<div class="t" style="left:76.2px;top:273.02px;font-size:4.85px;color:#3c3c3c;-webkit-text-stroke:0.15px #3c3c3c">Face_Platform</div>
<svg class="a" style="left:50.7px;top:283.21000000000004px" width="8" height="6"><ellipse cx="3.7" cy="3" rx="3.4" ry="2.1" fill="#999"/><circle cx="3.7" cy="3" r="1.1" fill="#707070"/></svg>
<div class="a" style="left:60.2px;top:282.01000000000005px;width:11.0px;height:8.5px;background:#f8f8f8"></div>
<div class="a" style="left:71.2px;top:282.01000000000005px;width:43.3px;height:8.5px;background:#f0f0f0"></div>
<svg class="a" style="left:62.2px;top:282.21000000000004px" width="8" height="8"><rect x="0.8" y="0.8" width="6.4" height="6.4" rx="1" fill="none" stroke="#8c8c8c" stroke-width="0.8"/><path d="M2.8,3.2 V5 H5" stroke="#aaa" stroke-width="0.5" fill="none"/></svg>
<div class="t" style="left:76.2px;top:283.61px;font-size:4.85px;color:#3c3c3c;-webkit-text-stroke:0.15px #3c3c3c">Face_Separator</div>
<svg class="a" style="left:50.7px;top:293.8px" width="9" height="6"><ellipse cx="4" cy="3" rx="3.6" ry="2.1" fill="#e2e2e2" stroke="#d2d2d2" stroke-width="0.5"/><path d="M6.5,0.5 L7.5,5.5" stroke="#cfcfcf" stroke-width="0.7"/></svg>
<div class="a" style="left:60.2px;top:292.6px;width:11.0px;height:8.5px;background:#f8f8f8"></div>
<div class="a" style="left:71.2px;top:292.6px;width:38.4px;height:8.5px;background:#f0f0f0"></div>
<svg class="a" style="left:62.2px;top:292.8px" width="8" height="8"><rect x="0.8" y="0.8" width="6.4" height="6.4" rx="1" fill="none" stroke="#8c8c8c" stroke-width="0.8"/><path d="M2.8,3.2 V5 H5" stroke="#aaa" stroke-width="0.5" fill="none"/></svg>
<div class="t" style="left:76.2px;top:294.2px;font-size:4.85px;color:#3c3c3c;-webkit-text-stroke:0.15px #3c3c3c">Rotation_Pin</div>
<svg class="a" style="left:33.7px;top:303.89px" width="6" height="7"><path d="M0.8,0.8 L4.6,3.5 L0.8,6.2Z" fill="none" stroke="#666" stroke-width="0.9"/></svg>
<svg class="a" style="left:42.7px;top:304.39px" width="8" height="6"><ellipse cx="3.7" cy="3" rx="3.4" ry="2.1" fill="#999"/><circle cx="3.7" cy="3" r="1.1" fill="#707070"/></svg>
<div class="a" style="left:52.2px;top:303.19px;width:11.0px;height:8.5px;background:#f8f8f8"></div>
<div class="a" style="left:63.2px;top:303.19px;width:28.6px;height:8.5px;background:#f0f0f0"></div>
<svg class="a" style="left:54.2px;top:304.39px" width="8" height="6"><path d="M0.5,0.8 H3 L3.8,1.6 H7.5 V5.5 H0.5Z" fill="#8e8e8e"/><path d="M0.5,2.2 H7.5" stroke="#b0b0b0" stroke-width="0.5"/></svg>
<div class="t" style="left:68.2px;top:304.78999999999996px;font-size:4.85px;color:#3c3c3c;-webkit-text-stroke:0.15px #3c3c3c">Sketches</div>
<svg class="a" style="left:33.7px;top:314.48px" width="6" height="7"><path d="M0.8,0.8 L4.6,3.5 L0.8,6.2Z" fill="none" stroke="#666" stroke-width="0.9"/></svg>
<svg class="a" style="left:42.7px;top:314.98px" width="9" height="6"><ellipse cx="4" cy="3" rx="3.6" ry="2.1" fill="#e2e2e2" stroke="#d2d2d2" stroke-width="0.5"/><path d="M6.5,0.5 L7.5,5.5" stroke="#cfcfcf" stroke-width="0.7"/></svg>
<div class="a" style="left:52.2px;top:313.78000000000003px;width:11.0px;height:8.5px;background:#f8f8f8"></div>
<div class="a" style="left:63.2px;top:313.78000000000003px;width:40.9px;height:8.5px;background:#f0f0f0"></div>
<svg class="a" style="left:54.2px;top:313.98px" width="8" height="8"><rect x="0.8" y="0.8" width="6.4" height="6.4" rx="0.8" fill="none" stroke="#a0a0a0" stroke-width="0.7"/><path d="M2,2.8 H6" stroke="#bbb" stroke-width="0.5"/></svg>
<div class="t" style="left:68.2px;top:315.38px;font-size:4.85px;color:#3c3c3c;-webkit-text-stroke:0.15px #3c3c3c">Sun_Bearing:1</div>
<svg class="a" style="left:33.7px;top:325.07px" width="6" height="7"><path d="M0.8,0.8 L4.6,3.5 L0.8,6.2Z" fill="none" stroke="#666" stroke-width="0.9"/></svg>
<svg class="a" style="left:42.7px;top:325.57px" width="9" height="6"><ellipse cx="4" cy="3" rx="3.6" ry="2.1" fill="#e2e2e2" stroke="#d2d2d2" stroke-width="0.5"/><path d="M6.5,0.5 L7.5,5.5" stroke="#cfcfcf" stroke-width="0.7"/></svg>
<div class="a" style="left:52.2px;top:324.37px;width:11.0px;height:8.5px;background:#f8f8f8"></div>
<div class="a" style="left:63.2px;top:324.37px;width:50.7px;height:8.5px;background:#f0f0f0"></div>
<svg class="a" style="left:54.2px;top:324.57px" width="8" height="8"><rect x="0.8" y="0.8" width="6.4" height="6.4" rx="0.8" fill="none" stroke="#a0a0a0" stroke-width="0.7"/><path d="M2,2.8 H6" stroke="#bbb" stroke-width="0.5"/></svg>
<div class="t" style="left:68.2px;top:325.96999999999997px;font-size:4.85px;color:#3c3c3c;-webkit-text-stroke:0.15px #3c3c3c">Y_Joint_Bearing:1</div>
<svg class="a" style="left:33.7px;top:335.65999999999997px" width="6" height="7"><path d="M0.8,0.8 L4.6,3.5 L0.8,6.2Z" fill="none" stroke="#666" stroke-width="0.9"/></svg>
<svg class="a" style="left:42.7px;top:336.15999999999997px" width="9" height="6"><ellipse cx="4" cy="3" rx="3.6" ry="2.1" fill="#e2e2e2" stroke="#d2d2d2" stroke-width="0.5"/><path d="M6.5,0.5 L7.5,5.5" stroke="#cfcfcf" stroke-width="0.7"/></svg>
<div class="a" style="left:52.2px;top:334.96px;width:11.0px;height:8.5px;background:#f8f8f8"></div>
<div class="a" style="left:63.2px;top:334.96px;width:53.1px;height:8.5px;background:#f0f0f0"></div>
<svg class="a" style="left:54.2px;top:335.15999999999997px" width="8" height="8"><rect x="0.8" y="0.8" width="6.4" height="6.4" rx="0.8" fill="none" stroke="#a0a0a0" stroke-width="0.7"/><path d="M2,2.8 H6" stroke="#bbb" stroke-width="0.5"/></svg>
<div class="t" style="left:68.2px;top:336.55999999999995px;font-size:4.85px;color:#3c3c3c;-webkit-text-stroke:0.15px #3c3c3c">Planet_Bearing_1:1</div>
<svg class="a" style="left:33.7px;top:346.25px" width="6" height="7"><path d="M0.8,0.8 L4.6,3.5 L0.8,6.2Z" fill="none" stroke="#666" stroke-width="0.9"/></svg>
<svg class="a" style="left:42.7px;top:346.75px" width="9" height="6"><ellipse cx="4" cy="3" rx="3.6" ry="2.1" fill="#e2e2e2" stroke="#d2d2d2" stroke-width="0.5"/><path d="M6.5,0.5 L7.5,5.5" stroke="#cfcfcf" stroke-width="0.7"/></svg>
<div class="a" style="left:52.2px;top:345.55px;width:11.0px;height:8.5px;background:#f8f8f8"></div>
<div class="a" style="left:63.2px;top:345.55px;width:53.1px;height:8.5px;background:#f0f0f0"></div>
<svg class="a" style="left:54.2px;top:345.75px" width="8" height="8"><rect x="0.8" y="0.8" width="6.4" height="6.4" rx="0.8" fill="none" stroke="#a0a0a0" stroke-width="0.7"/><path d="M2,2.8 H6" stroke="#bbb" stroke-width="0.5"/></svg>
<div class="t" style="left:68.2px;top:347.15px;font-size:4.85px;color:#3c3c3c;-webkit-text-stroke:0.15px #3c3c3c">Planet_Bearing_2:1</div>
<svg class="a" style="left:33.7px;top:356.84px" width="6" height="7"><path d="M0.8,0.8 L4.6,3.5 L0.8,6.2Z" fill="none" stroke="#666" stroke-width="0.9"/></svg>
<svg class="a" style="left:42.7px;top:357.34px" width="9" height="6"><ellipse cx="4" cy="3" rx="3.6" ry="2.1" fill="#e2e2e2" stroke="#d2d2d2" stroke-width="0.5"/><path d="M6.5,0.5 L7.5,5.5" stroke="#cfcfcf" stroke-width="0.7"/></svg>
<div class="a" style="left:52.2px;top:356.14px;width:11.0px;height:8.5px;background:#f8f8f8"></div>
<div class="a" style="left:63.2px;top:356.14px;width:53.1px;height:8.5px;background:#f0f0f0"></div>
<svg class="a" style="left:54.2px;top:356.34px" width="8" height="8"><rect x="0.8" y="0.8" width="6.4" height="6.4" rx="0.8" fill="none" stroke="#a0a0a0" stroke-width="0.7"/><path d="M2,2.8 H6" stroke="#bbb" stroke-width="0.5"/></svg>
<div class="t" style="left:68.2px;top:357.73999999999995px;font-size:4.85px;color:#3c3c3c;-webkit-text-stroke:0.15px #3c3c3c">Planet_Bearing_3:1</div>
<svg class="a" style="left:25.7px;top:367.43px" width="6" height="7"><path d="M0.8,0.8 L4.6,3.5 L0.8,6.2Z" fill="none" stroke="#666" stroke-width="0.9"/></svg>
<svg class="a" style="left:34.7px;top:367.93px" width="9" height="6"><ellipse cx="4" cy="3" rx="3.6" ry="2.1" fill="#e2e2e2" stroke="#d2d2d2" stroke-width="0.5"/><path d="M6.5,0.5 L7.5,5.5" stroke="#cfcfcf" stroke-width="0.7"/></svg>
<div class="a" style="left:44.2px;top:366.73px;width:11.0px;height:8.5px;background:#f8f8f8"></div>
<div class="a" style="left:55.2px;top:366.73px;width:45.8px;height:8.5px;background:#f0f0f0"></div>
<svg class="a" style="left:46.2px;top:366.93px" width="8" height="8"><rect x="0.8" y="0.8" width="6.4" height="6.4" rx="0.8" fill="none" stroke="#a0a0a0" stroke-width="0.7"/><path d="M2,2.8 H6" stroke="#bbb" stroke-width="0.5"/></svg>
<div class="t" style="left:60.2px;top:368.33px;font-size:4.85px;color:#3c3c3c;-webkit-text-stroke:0.15px #3c3c3c">Platform_Roof:1</div>
<svg class="a" style="left:25.7px;top:378.02px" width="6" height="7"><path d="M0.8,0.8 L4.6,3.5 L0.8,6.2Z" fill="none" stroke="#666" stroke-width="0.9"/></svg>
<svg class="a" style="left:34.7px;top:378.52px" width="9" height="6"><ellipse cx="4" cy="3" rx="3.6" ry="2.1" fill="#e2e2e2" stroke="#d2d2d2" stroke-width="0.5"/><path d="M6.5,0.5 L7.5,5.5" stroke="#cfcfcf" stroke-width="0.7"/></svg>
<div class="a" style="left:44.2px;top:377.32px;width:22.0px;height:8.5px;background:#f8f8f8"></div>
<div class="a" style="left:66.2px;top:377.32px;width:55.6px;height:8.5px;background:#f0f0f0"></div>
<svg class="a" style="left:46.2px;top:377.52px" width="8" height="8"><path d="M0.8,1.5 H3.2 V0.8 H5 V2.8 H7.2 V7.2 H0.8Z" fill="none" stroke="#9a9a9a" stroke-width="0.7"/><path d="M3.2,1.5 V5.5 H5.5" stroke="#aaa" stroke-width="0.5" fill="none"/></svg>
<svg class="a" style="left:57.2px;top:378.02px" width="8" height="7"><g fill="none" stroke="#333" stroke-width="1"><rect x="0.9" y="3.4" width="3.6" height="2.4" rx="1.2" transform="rotate(-40 2.7 4.6)"/><rect x="3.5" y="1.2" width="3.6" height="2.4" rx="1.2" transform="rotate(-40 5.3 2.4)"/></g></svg>
<div class="t" style="left:71.2px;top:378.91999999999996px;font-size:4.85px;color:#3c3c3c;-webkit-text-stroke:0.15px #3c3c3c">RASPBERRY_PI_5 v1:1</div>
<svg class="a" style="left:17.7px;top:388.61px" width="6" height="7"><path d="M0.8,0.8 L4.6,3.5 L0.8,6.2Z" fill="none" stroke="#666" stroke-width="0.9"/></svg>
<svg class="a" style="left:26.7px;top:389.11px" width="9" height="6"><ellipse cx="4" cy="3" rx="3.6" ry="2.1" fill="#e2e2e2" stroke="#d2d2d2" stroke-width="0.5"/><path d="M6.5,0.5 L7.5,5.5" stroke="#cfcfcf" stroke-width="0.7"/></svg>
<div class="a" style="left:36.2px;top:387.91px;width:11.0px;height:8.5px;background:#f8f8f8"></div>
<div class="a" style="left:47.2px;top:387.91px;width:62.9px;height:8.5px;background:#f0f0f0"></div>
<svg class="a" style="left:38.2px;top:388.11px" width="8" height="8"><path d="M0.8,1.5 H3.2 V0.8 H5 V2.8 H7.2 V7.2 H0.8Z" fill="none" stroke="#9a9a9a" stroke-width="0.7"/><path d="M3.2,1.5 V5.5 H5.5" stroke="#aaa" stroke-width="0.5" fill="none"/></svg>
<div class="t" style="left:52.2px;top:389.51px;font-size:4.85px;color:#3c3c3c;-webkit-text-stroke:0.15px #3c3c3c">Platform_Main_Second:1</div>
<svg class="a" style="left:17.7px;top:399.2px" width="6" height="7"><path d="M0.8,0.8 L4.6,3.5 L0.8,6.2Z" fill="none" stroke="#666" stroke-width="0.9"/></svg>
<svg class="a" style="left:26.7px;top:399.7px" width="9" height="6"><ellipse cx="4" cy="3" rx="3.6" ry="2.1" fill="#e2e2e2" stroke="#d2d2d2" stroke-width="0.5"/><path d="M6.5,0.5 L7.5,5.5" stroke="#cfcfcf" stroke-width="0.7"/></svg>
<div class="a" style="left:36.2px;top:398.5px;width:11.0px;height:8.5px;background:#f8f8f8"></div>
<div class="a" style="left:47.2px;top:398.5px;width:72.7px;height:8.5px;background:#f0f0f0"></div>
<svg class="a" style="left:38.2px;top:398.7px" width="8" height="8"><path d="M0.8,1.5 H3.2 V0.8 H5 V2.8 H7.2 V7.2 H0.8Z" fill="none" stroke="#9a9a9a" stroke-width="0.7"/><path d="M3.2,1.5 V5.5 H5.5" stroke="#aaa" stroke-width="0.5" fill="none"/></svg>
<div class="t" style="left:52.2px;top:400.09999999999997px;font-size:4.85px;color:#3c3c3c;-webkit-text-stroke:0.15px #3c3c3c">Transportation_Mechanism:1</div>
<svg class="a" style="left:17.7px;top:409.79px" width="6" height="7"><path d="M0.8,0.8 L4.6,3.5 L0.8,6.2Z" fill="none" stroke="#666" stroke-width="0.9"/></svg>
<svg class="a" style="left:26.7px;top:410.29px" width="9" height="6"><ellipse cx="4" cy="3" rx="3.6" ry="2.1" fill="#e2e2e2" stroke="#d2d2d2" stroke-width="0.5"/><path d="M6.5,0.5 L7.5,5.5" stroke="#cfcfcf" stroke-width="0.7"/></svg>
<div class="a" style="left:36.2px;top:409.09000000000003px;width:11.0px;height:8.5px;background:#f8f8f8"></div>
<div class="a" style="left:47.2px;top:409.09000000000003px;width:50.7px;height:8.5px;background:#f0f0f0"></div>
<svg class="a" style="left:38.2px;top:409.29px" width="8" height="8"><rect x="0.8" y="0.8" width="6.4" height="6.4" rx="0.8" fill="none" stroke="#a0a0a0" stroke-width="0.7"/><path d="M2,2.8 H6" stroke="#bbb" stroke-width="0.5"/></svg>
<div class="t" style="left:52.2px;top:410.69px;font-size:4.85px;color:#3c3c3c;-webkit-text-stroke:0.15px #3c3c3c">Product_Samples:1</div>
<svg class="a" style="left:580px;top:70px" width="56" height="45"><path d="M15,9.6 L36.3,7.4 L39.5,36 L20,37.4 L14.7,25.8Z" fill="#ececec" stroke="#b5b5b5" stroke-width="0.7"/><path d="M14.9,20.4 L37.6,19 M14.8,24.4 L38.1,23 M20,37.4 L20.5,24.3 M29,36.8 L29,23.5" stroke="#c8c8c8" stroke-width="0.6" fill="none"/><path d="M10.3,21.5 L20,38" stroke="#f08a8a" stroke-width="0.9"/><path d="M20,38 L47,36" stroke="#9ad89a" stroke-width="0.9"/><text x="25.5" y="18.4" font-size="4.6" fill="#777" text-anchor="middle" font-family="Liberation Sans" font-weight="bold">RIGHT</text></svg>
<div class="a" style="left:2px;top:519.5px;width:133px;height:11px;background:#efefef;border:0.8px solid #e2e2e2"></div>
<div class="t" style="left:13.5px;top:521.8px;color:#8a8a8a;font-size:4.75px">COMMENTS</div>
<div class="a" style="left:125.3px;top:522.6px;width:4px;height:4px;border-radius:50%;background:#444"></div>
<svg class="a" style="left:260px;top:517px" width="120" height="14"><path d="M10.4,3.5 V10.5 M6.5,7 H14.3" stroke="#999" stroke-width="2.2"/><circle cx="18" cy="7" r="0.8" fill="#666"/><path d="M21.5,8 Q25.5,3 29.5,8 Q25.5,11 21.5,8Z" fill="#999"/><rect x="23" y="4" width="5" height="3" fill="#aaa"/><rect x="31.5" y="1.8" width="10.5" height="10.5" fill="#2d8ad8"/><path d="M34.5,9.5 V5.5 M36.3,9.5 V4.8 M38.1,9.5 V5.2 M39.6,9.5 V6.2 M34,9.5 Q36.5,12 40,9.5" stroke="#fff" stroke-width="0.9" fill="none"/><circle cx="47.5" cy="6.5" r="2.6" fill="none" stroke="#777" stroke-width="0.9"/><path d="M49.5,8.5 L51.5,10.5" stroke="#777" stroke-width="1.1"/><rect x="44" y="3.5" width="2" height="2" fill="#aaa"/><circle cx="59.5" cy="6.5" r="3" fill="none" stroke="#777" stroke-width="0.9"/><path d="M61.8,8.8 L64,11" stroke="#777" stroke-width="1.2"/><circle cx="67" cy="7" r="0.8" fill="#666"/><rect x="71" y="3.5" width="7.5" height="6" fill="#8aa2c8"/><path d="M74.7,9.5 V11 M72.5,11 H77" stroke="#8aa2c8" stroke-width="0.8"/><circle cx="81" cy="7" r="0.8" fill="#666"/><rect x="84" y="3.5" width="7.5" height="7" fill="#aaa"/><circle cx="94" cy="7" r="0.8" fill="#666"/><rect x="97.5" y="3.5" width="7.5" height="7" fill="#8aa2c8"/><path d="M101.25,3.5 V10.5 M97.5,7 H105" stroke="#c8d4e8" stroke-width="0.6"/><circle cx="108" cy="7" r="0.8" fill="#666"/></svg>
<div class="a" style="left:0;top:531px;width:636px;height:24px;background:#f5f5f5;border-top:1px solid #e2e2e2"></div>
<div class="a" style="left:0;top:553px;width:636px;height:2px;background:#d8d8d8"></div>
<div class="t" style="left:3px;top:532.5px;font-size:3.2px;line-height:4px;color:#b0b0b0">history</div>
<svg class="a" style="left:0;top:540px" width="60" height="10"><g fill="#4a4a4a"><rect x="5.2" y="2.2" width="1" height="5.6"/><path d="M10.3,2.3 L6.3,5 L10.3,7.7Z"/><path d="M21,2.5 L16.5,5 L21,7.5Z"/><path d="M27.3,2 L32.5,5 L27.3,8Z"/><path d="M38.5,2.5 L43,5 L38.5,7.5Z"/><path d="M49.5,2.3 L53.5,5 L49.5,7.7Z"/><rect x="53.8" y="2.2" width="1" height="5.6"/></g></svg>
<svg class="a" style="left:0;top:538px" width="636" height="15"><rect x="65.5" y="1.5" width="6" height="6" fill="#e6e6e6" stroke="#bbb" stroke-width="0.5"/><path d="M66.5,6.5 L71.0,2" stroke="#e89a40" stroke-width="1.2"/><path d="M76.4,2.5 L77.9,1 L82.4,1 L82.4,6.5 L80.9,8 L76.4,8Z" fill="#4a93d8"/><circle cx="88.7" cy="4.5" r="3.2" fill="#e8e8e8" stroke="#e0a040" stroke-width="0.9"/><rect x="96.6" y="1.5" width="6" height="6" fill="#e6e6e6" stroke="#bbb" stroke-width="0.5"/><path d="M97.6,6.5 L102.1,2" stroke="#e89a40" stroke-width="1.2"/><path d="M107.5,2.5 L109.0,1 L113.5,1 L113.5,6.5 L112.0,8 L107.5,8Z" fill="#4a93d8"/><rect x="117.4" y="1.5" width="6" height="6" fill="#e6e6e6" stroke="#bbb" stroke-width="0.5"/><path d="M118.4,6.5 L122.9,2" stroke="#e89a40" stroke-width="1.2"/><path d="M128.8,2.5 L130.3,1 L134.8,1 L134.8,6.5 L133.3,8 L128.8,8Z" fill="#4a93d8"/><path d="M139.0,8 L139.0,4 Q139.0,1 142.0,1 L145.0,1 L145.0,8Z" fill="#bbb"/><path d="M140.0,7 L144.0,3" stroke="#4a93d8" stroke-width="1.3"/><circle cx="152.5" cy="4.5" r="3" fill="none" stroke="#4a93d8" stroke-width="1.2"/><path d="M160.3,1 V8 M162.8,1 V8 M165.3,1 V8" stroke="#bbb" stroke-width="1"/><path d="M160.3,8 H166.3" stroke="#e0a040" stroke-width="0.8"/><path d="M172.2,1 V8" stroke="#999" stroke-width="0.7"/><rect x="173.0" y="1" width="4.5" height="3.5" fill="#3a8fd0"/><path d="M181.8,2.5 L183.3,1 L187.8,1 L187.8,6.5 L186.3,8 L181.8,8Z" fill="#4a93d8"/><rect x="192.3" y="1.5" width="6" height="6" fill="#e6e6e6" stroke="#bbb" stroke-width="0.5"/><path d="M193.3,6.5 L197.8,2" stroke="#e89a40" stroke-width="1.2"/><path d="M202.5,2.5 L204.0,1 L208.5,1 L208.5,6.5 L207.0,8 L202.5,8Z" fill="#4a93d8"/><path d="M213.5,2.5 L215.0,1 L219.5,1 L219.5,6.5 L218.0,8 L213.5,8Z" fill="#4a93d8"/><path d="M224.5,3 L227.0,1.5 L227.0,8 L224.5,7Z" fill="#4caa5a"/><path d="M227.5,1.5 L230.0,1 L230.0,7 L227.5,8Z" fill="#e88a40"/><rect x="235.0" y="1.5" width="6" height="6" fill="#e6e6e6" stroke="#bbb" stroke-width="0.5"/><path d="M236.0,6.5 L240.5,2" stroke="#e89a40" stroke-width="1.2"/><circle cx="248" cy="4.5" r="3.2" fill="#e8e8e8" stroke="#e0a040" stroke-width="0.9"/><g fill="#999"><circle cx="256.4" cy="4.5" r="1.1"/><circle cx="259" cy="4.5" r="1.1"/><circle cx="261.6" cy="4.5" r="1.1"/></g><path d="M267,4.5 A3,3 0 0 0 273,4.5" fill="#aaa"/><path d="M267,4.5 A3,3 0 0 1 273,4.5" fill="#ddd"/><path d="M279.5,1 V8" stroke="#999" stroke-width="0.7"/><rect x="280.3" y="1" width="4.5" height="3.5" fill="#3a8fd0"/><g fill="#999"><circle cx="288.4" cy="4.5" r="1.1"/><circle cx="291" cy="4.5" r="1.1"/><circle cx="293.6" cy="4.5" r="1.1"/></g><path d="M299,4.5 A3,3 0 0 0 305,4.5" fill="#aaa"/><path d="M299,4.5 A3,3 0 0 1 305,4.5" fill="#ddd"/><g fill="#999"><circle cx="309.4" cy="4.5" r="1.1"/><circle cx="312" cy="4.5" r="1.1"/><circle cx="314.6" cy="4.5" r="1.1"/></g><path d="M320,4.5 A3,3 0 0 0 326,4.5" fill="#aaa"/><path d="M320,4.5 A3,3 0 0 1 326,4.5" fill="#ddd"/><g fill="#999"><circle cx="330.4" cy="4.5" r="1.1"/><circle cx="333" cy="4.5" r="1.1"/><circle cx="335.6" cy="4.5" r="1.1"/></g><path d="M341,4.5 A3,3 0 0 0 347,4.5" fill="#aaa"/><path d="M341,4.5 A3,3 0 0 1 347,4.5" fill="#ddd"/><path d="M354.6,1 V8 M351.1,4.5 H358.1" stroke="#555" stroke-width="1"/><circle cx="365" cy="4.5" r="3.2" fill="#e8e8e8" stroke="#e0a040" stroke-width="0.9"/><path d="M373.5,1 V8" stroke="#999" stroke-width="0.7"/><rect x="374.3" y="1" width="4.5" height="3.5" fill="#3a8fd0"/><path d="M385,4.5 A3,3 0 0 0 391,4.5" fill="#aaa"/><path d="M385,4.5 A3,3 0 0 1 391,4.5" fill="#ddd"/><path d="M395,4.5 A3,3 0 0 0 401,4.5" fill="#aaa"/><path d="M395,4.5 A3,3 0 0 1 401,4.5" fill="#ddd"/><path d="M406,4.5 A3,3 0 0 0 412,4.5" fill="#aaa"/><path d="M406,4.5 A3,3 0 0 1 412,4.5" fill="#ddd"/><path d="M416.5,3 L419.0,1.5 L419.0,8 L416.5,7Z" fill="#4caa5a"/><path d="M419.5,1.5 L422.0,1 L422.0,7 L419.5,8Z" fill="#e88a40"/><path d="M427.5,3 L430.0,1.5 L430.0,8 L427.5,7Z" fill="#4caa5a"/><path d="M430.5,1.5 L433.0,1 L433.0,7 L430.5,8Z" fill="#e88a40"/><rect x="436.7" y="1.5" width="6" height="6" fill="#e6e6e6" stroke="#bbb" stroke-width="0.5"/><path d="M437.7,6.5 L442.2,2" stroke="#e89a40" stroke-width="1.2"/><rect x="447.0" y="1.5" width="6.5" height="6" fill="#3a8fd0"/><path d="M447.0,7.5 L449.5,4.5 L453.5,7.5Z" fill="#9ccaf0"/><g fill="#999"><circle cx="458.2" cy="4.5" r="1.1"/><circle cx="460.8" cy="4.5" r="1.1"/><circle cx="463.40000000000003" cy="4.5" r="1.1"/></g><path d="M467.5,4.5 A3,3 0 0 0 473.5,4.5" fill="#aaa"/><path d="M467.5,4.5 A3,3 0 0 1 473.5,4.5" fill="#ddd"/><g fill="#999"><circle cx="479.2" cy="4.5" r="1.1"/><circle cx="481.8" cy="4.5" r="1.1"/><circle cx="484.40000000000003" cy="4.5" r="1.1"/></g><path d="M490,4.5 A3,3 0 0 0 496,4.5" fill="#aaa"/><path d="M490,4.5 A3,3 0 0 1 496,4.5" fill="#ddd"/><path d="M501.4,1 V8" stroke="#999" stroke-width="0.7"/><rect x="502.2" y="1" width="4.5" height="3.5" fill="#3a8fd0"/><rect x="510.6" y="1.5" width="6" height="6" fill="#e6e6e6" stroke="#bbb" stroke-width="0.5"/><path d="M511.6,6.5 L516.1,2" stroke="#e89a40" stroke-width="1.2"/><path d="M521.5,2.5 L523.0,1 L527.5,1 L527.5,6.5 L526.0,8 L521.5,8Z" fill="#4a93d8"/><rect x="531.6" y="1.5" width="6" height="6" fill="#e6e6e6" stroke="#bbb" stroke-width="0.5"/><path d="M532.6,6.5 L537.1,2" stroke="#e89a40" stroke-width="1.2"/><path d="M542.5,2.5 L544.0,1 L548.5,1 L548.5,6.5 L547.0,8 L542.5,8Z" fill="#4a93d8"/><path d="M553.2,1 V8 M555.7,1 V8 M558.2,1 V8" stroke="#bbb" stroke-width="1"/><path d="M553.2,8 H559.2" stroke="#e0a040" stroke-width="0.8"/><path d="M563.5,1 V8" stroke="#999" stroke-width="0.7"/><rect x="564.3" y="1" width="4.5" height="3.5" fill="#3a8fd0"/><path d="M573.9,2.5 L575.4,1 L579.9,1 L579.9,6.5 L578.4,8 L573.9,8Z" fill="#4a93d8"/><path d="M584.5,2.5 L586.0,1 L590.5,1 L590.5,6.5 L589.0,8 L584.5,8Z" fill="#4a93d8"/><path d="M595.3,1 V8" stroke="#999" stroke-width="0.7"/><rect x="596.0999999999999" y="1" width="4.5" height="3.5" fill="#3a8fd0"/><path d="M605.5,2.5 L607.0,1 L611.5,1 L611.5,6.5 L610.0,8 L605.5,8Z" fill="#4a93d8"/><line x1="66" y1="12.2" x2="610" y2="12.2" stroke="#c8c8c8" stroke-width="0.7"/><line x1="88" y1="12.2" x2="165" y2="12.2" stroke="#777" stroke-width="0.7"/><line x1="68.5" y1="10" x2="68.5" y2="12" stroke="#999" stroke-width="0.5"/><line x1="78.9" y1="10" x2="78.9" y2="12" stroke="#999" stroke-width="0.5"/><line x1="88.7" y1="10" x2="88.7" y2="12" stroke="#999" stroke-width="0.5"/><line x1="99.6" y1="10" x2="99.6" y2="12" stroke="#999" stroke-width="0.5"/><line x1="110" y1="10" x2="110" y2="12" stroke="#999" stroke-width="0.5"/><line x1="120.4" y1="10" x2="120.4" y2="12" stroke="#999" stroke-width="0.5"/><line x1="131.3" y1="10" x2="131.3" y2="12" stroke="#999" stroke-width="0.5"/><line x1="141.5" y1="10" x2="141.5" y2="12" stroke="#999" stroke-width="0.5"/><line x1="152.5" y1="10" x2="152.5" y2="12" stroke="#999" stroke-width="0.5"/><line x1="162.8" y1="10" x2="162.8" y2="12" stroke="#999" stroke-width="0.5"/><line x1="174.7" y1="10" x2="174.7" y2="12" stroke="#999" stroke-width="0.5"/><line x1="184.3" y1="10" x2="184.3" y2="12" stroke="#999" stroke-width="0.5"/><line x1="195.3" y1="10" x2="195.3" y2="12" stroke="#999" stroke-width="0.5"/><line x1="205" y1="10" x2="205" y2="12" stroke="#999" stroke-width="0.5"/><line x1="216" y1="10" x2="216" y2="12" stroke="#999" stroke-width="0.5"/><line x1="227" y1="10" x2="227" y2="12" stroke="#999" stroke-width="0.5"/><line x1="238" y1="10" x2="238" y2="12" stroke="#999" stroke-width="0.5"/><line x1="248" y1="10" x2="248" y2="12" stroke="#999" stroke-width="0.5"/><line x1="259" y1="10" x2="259" y2="12" stroke="#999" stroke-width="0.5"/><line x1="270" y1="10" x2="270" y2="12" stroke="#999" stroke-width="0.5"/><line x1="282" y1="10" x2="282" y2="12" stroke="#999" stroke-width="0.5"/><line x1="291" y1="10" x2="291" y2="12" stroke="#999" stroke-width="0.5"/><line x1="302" y1="10" x2="302" y2="12" stroke="#999" stroke-width="0.5"/><line x1="312" y1="10" x2="312" y2="12" stroke="#999" stroke-width="0.5"/><line x1="323" y1="10" x2="323" y2="12" stroke="#999" stroke-width="0.5"/><line x1="333" y1="10" x2="333" y2="12" stroke="#999" stroke-width="0.5"/><line x1="344" y1="10" x2="344" y2="12" stroke="#999" stroke-width="0.5"/><line x1="354.6" y1="10" x2="354.6" y2="12" stroke="#999" stroke-width="0.5"/><line x1="365" y1="10" x2="365" y2="12" stroke="#999" stroke-width="0.5"/><line x1="376" y1="10" x2="376" y2="12" stroke="#999" stroke-width="0.5"/><line x1="388" y1="10" x2="388" y2="12" stroke="#999" stroke-width="0.5"/><line x1="398" y1="10" x2="398" y2="12" stroke="#999" stroke-width="0.5"/><line x1="409" y1="10" x2="409" y2="12" stroke="#999" stroke-width="0.5"/><line x1="419" y1="10" x2="419" y2="12" stroke="#999" stroke-width="0.5"/><line x1="430" y1="10" x2="430" y2="12" stroke="#999" stroke-width="0.5"/><line x1="439.7" y1="10" x2="439.7" y2="12" stroke="#999" stroke-width="0.5"/><line x1="450" y1="10" x2="450" y2="12" stroke="#999" stroke-width="0.5"/><line x1="460.8" y1="10" x2="460.8" y2="12" stroke="#999" stroke-width="0.5"/><line x1="470.5" y1="10" x2="470.5" y2="12" stroke="#999" stroke-width="0.5"/><line x1="481.8" y1="10" x2="481.8" y2="12" stroke="#999" stroke-width="0.5"/><line x1="493" y1="10" x2="493" y2="12" stroke="#999" stroke-width="0.5"/><line x1="503.9" y1="10" x2="503.9" y2="12" stroke="#999" stroke-width="0.5"/><line x1="513.6" y1="10" x2="513.6" y2="12" stroke="#999" stroke-width="0.5"/><line x1="524" y1="10" x2="524" y2="12" stroke="#999" stroke-width="0.5"/><line x1="534.6" y1="10" x2="534.6" y2="12" stroke="#999" stroke-width="0.5"/><line x1="545" y1="10" x2="545" y2="12" stroke="#999" stroke-width="0.5"/><line x1="555.7" y1="10" x2="555.7" y2="12" stroke="#999" stroke-width="0.5"/><line x1="566" y1="10" x2="566" y2="12" stroke="#999" stroke-width="0.5"/><line x1="576.4" y1="10" x2="576.4" y2="12" stroke="#999" stroke-width="0.5"/><line x1="587" y1="10" x2="587" y2="12" stroke="#999" stroke-width="0.5"/><line x1="597.8" y1="10" x2="597.8" y2="12" stroke="#999" stroke-width="0.5"/><line x1="608" y1="10" x2="608" y2="12" stroke="#999" stroke-width="0.5"/><rect x="87.2" y="10.4" width="3.6" height="3.6" fill="#fff" stroke="#555" stroke-width="0.9"/><rect x="256.2" y="10.4" width="3.6" height="3.6" fill="#fff" stroke="#555" stroke-width="0.9"/><rect x="288.2" y="10.4" width="3.6" height="3.6" fill="#fff" stroke="#555" stroke-width="0.9"/><rect x="310.2" y="10.4" width="3.6" height="3.6" fill="#fff" stroke="#555" stroke-width="0.9"/><rect x="330.8" y="10.4" width="3.6" height="3.6" fill="#fff" stroke="#555" stroke-width="0.9"/><rect x="458.0" y="10.4" width="3.6" height="3.6" fill="#fff" stroke="#555" stroke-width="0.9"/><rect x="479.2" y="10.4" width="3.6" height="3.6" fill="#fff" stroke="#555" stroke-width="0.9"/></svg>
<svg class="a" style="left:621px;top:540px" width="10" height="10"><circle cx="5" cy="5" r="3" fill="none" stroke="#555" stroke-width="2" stroke-dasharray="1.3 0.8"/><circle cx="5" cy="5" r="2.2" fill="none" stroke="#555" stroke-width="1.2"/></svg>
<div class="a" style="left:0;top:0;width:1.2px;height:555px;background:#cdcdcd"></div></body></html>
